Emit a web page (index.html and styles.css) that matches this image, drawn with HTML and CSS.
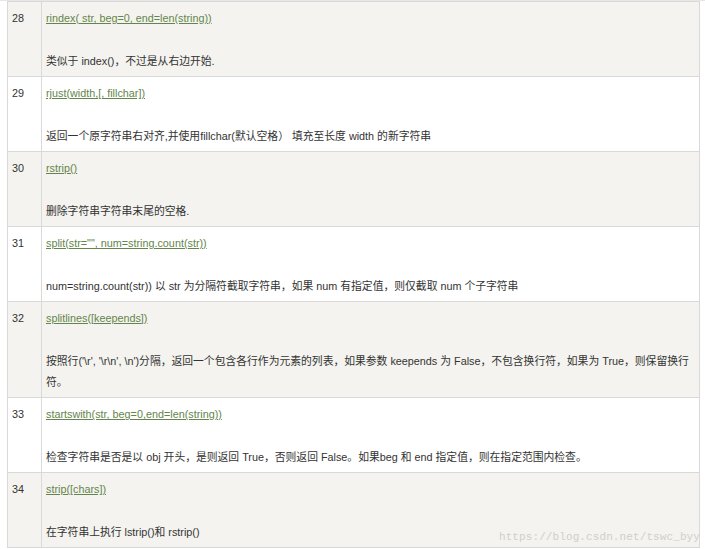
FILE: index.html
```html
<!DOCTYPE html>
<html lang="zh">
<head>
<meta charset="utf-8">
<title>Python 字符串方法</title>
<link rel="stylesheet" href="styles.css">
</head>
<body>
<div class="page">
  <table class="reference">
    <colgroup><col class="c-num"><col class="c-desc"></colgroup>
    <tbody>
      <tr class="odd">
        <td>28</td>
        <td><a href="#">rindex( str, beg=0, end=len(string))</a><br><br>类似于 index()，不过是从右边开始.</td>
      </tr>
      <tr>
        <td>29</td>
        <td><a href="#">rjust(width,[, fillchar])</a><br><br>返回一个原字符串右对齐,并使用fillchar(默认空格） 填充至长度 width 的新字符串</td>
      </tr>
      <tr class="odd">
        <td>30</td>
        <td><a href="#">rstrip()</a><br><br>删除字符串字符串末尾的空格.</td>
      </tr>
      <tr>
        <td>31</td>
        <td><a href="#">split(str="", num=string.count(str))</a><br><br>num=string.count(str)) 以 str 为分隔符截取字符串，如果 num 有指定值，则仅截取 num 个子字符串</td>
      </tr>
      <tr class="odd">
        <td>32</td>
        <td><a href="#">splitlines([keepends])</a><br><br>按照行('\r', '\r\n', \n')分隔，返回一个包含各行作为元素的列表，如果参数 keepends 为 False，不包含换行符，如果为 True，则保留换行符。</td>
      </tr>
      <tr>
        <td>33</td>
        <td><a href="#">startswith(str, beg=0,end=len(string))</a><br><br>检查字符串是否是以 obj 开头，是则返回 True，否则返回 False。如果beg 和 end 指定值，则在指定范围内检查。</td>
      </tr>
      <tr class="odd">
        <td>34</td>
        <td><a href="#">strip([chars])</a><br><br>在字符串上执行 lstrip()和 rstrip()</td>
      </tr>
    </tbody>
  </table>
  <div class="watermark">https://blog.csdn.net/tswc_byy</div>
</div>
</body>
</html>
```

FILE: styles.css
```css
html, body {
  margin: 0;
  padding: 0;
  background: #ffffff;
}

body {
  font-family: "Liberation Sans", Arial, "Noto Sans CJK SC", sans-serif;
  font-size: 10.8px;
  color: #333333;
}

.page {
  position: relative;
  border-top: 1px solid #e6e6e6;
  padding: 0 5px 0 7px;
}

.reference {
  width: 693px;
  border-collapse: collapse;
  table-layout: fixed;
}

.c-num {
  width: 34px;
}

.reference td {
  border: 1px solid #d9d9d9;
  padding: 6px 4px 4px 4px;
  line-height: 21.33px;
  vertical-align: top;
}

.reference tr.odd {
  background: #f4f3ef;
}

.reference a {
  color: #64854c;
  text-decoration: underline;
}

.watermark {
  position: absolute;
  right: 5px;
  bottom: 5px;
  font-family: "Liberation Mono", "Courier New", monospace;
  font-size: 11px;
  color: #cfcfcf;
  letter-spacing: 0.1px;
}
```
